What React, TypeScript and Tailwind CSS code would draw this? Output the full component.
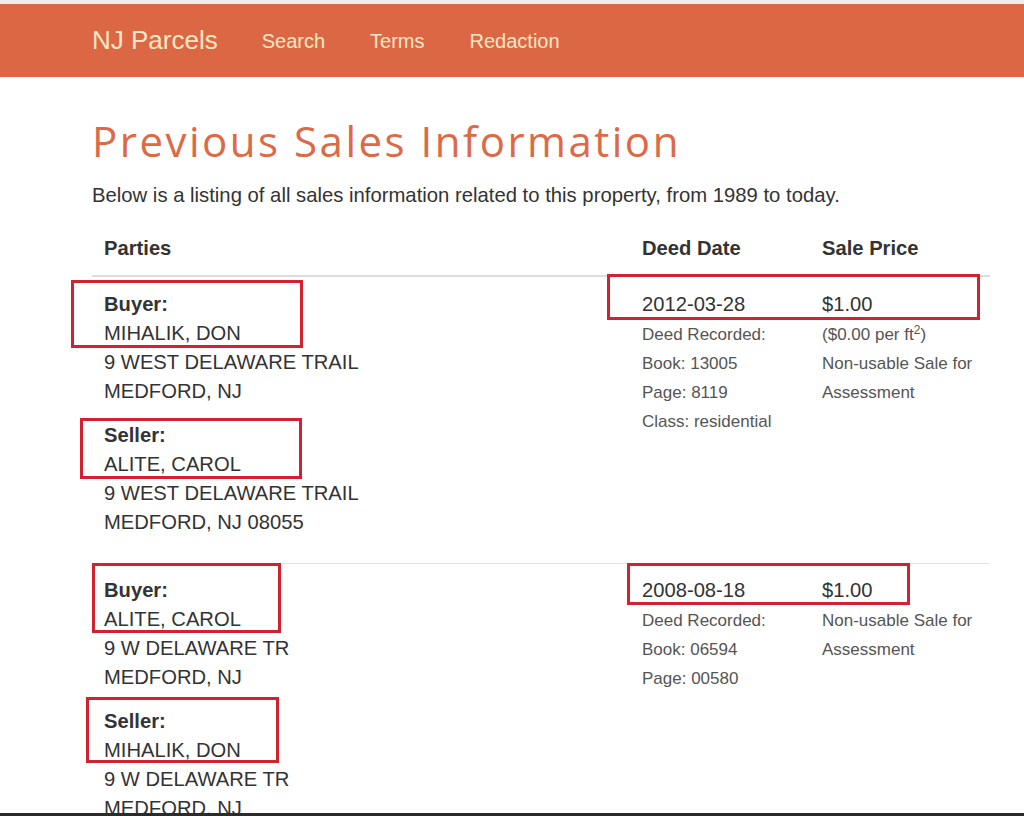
import React from 'react';

type Party = { label: string; name: string; street: string; city: string };
type Sale = {
    parties: Party[];
    date: string;
    details: string[];
    price: string;
    perFt?: string;
    note: string[];
};

const sales: Sale[] = [
    {
        parties: [
            { label: 'Buyer:', name: 'MIHALIK, DON', street: '9 WEST DELAWARE TRAIL', city: 'MEDFORD, NJ' },
            { label: 'Seller:', name: 'ALITE, CAROL', street: '9 WEST DELAWARE TRAIL', city: 'MEDFORD, NJ 08055' },
        ],
        date: '2012-03-28',
        details: ['Deed Recorded:', 'Book: 13005', 'Page: 8119', 'Class: residential'],
        price: '$1.00',
        perFt: '$0.00',
        note: ['Non-usable Sale for', 'Assessment'],
    },
    {
        parties: [
            { label: 'Buyer:', name: 'ALITE, CAROL', street: '9 W DELAWARE TR', city: 'MEDFORD, NJ' },
            { label: 'Seller:', name: 'MIHALIK, DON', street: '9 W DELAWARE TR', city: 'MEDFORD, NJ' },
        ],
        date: '2008-08-18',
        details: ['Deed Recorded:', 'Book: 06594', 'Page: 00580'],
        price: '$1.00',
        note: ['Non-usable Sale for', 'Assessment'],
    },
];

// red annotation boxes drawn on top of the screenshot
const marks = [
    'left-[71px] top-[280px] w-[232px] h-[68px]',
    'left-[80px] top-[418px] w-[222px] h-[61px]',
    'left-[607px] top-[274px] w-[373px] h-[46px]',
    'left-[92px] top-[563px] w-[189px] h-[70px]',
    'left-[86px] top-[697px] w-[193px] h-[66px]',
    'left-[627px] top-[563px] w-[283px] h-[42px]',
];

export default function App() {
    return (
        <div className="relative min-h-screen bg-white font-['Liberation_Sans',Arial,sans-serif] text-[#333] overflow-hidden">
            <div className="h-[4px] bg-[#ececec]" />

            {/* Navbar */}
            <nav className="h-[73px] bg-[#dc6744] flex items-center pl-[92px] text-[#fce7c4]">
                <span className="text-[26px] mr-[44px]">NJ Parcels</span>
                <div className="flex gap-[45px] text-[20px]">
                    <span>Search</span>
                    <span>Terms</span>
                    <span>Redaction</span>
                </div>
            </nav>

            <main className="pl-[92px] w-[990px]">
                <h1 className="mt-[39px] text-[42px] leading-[50px] font-medium text-[#dc6a46] font-['Open_Sans',sans-serif] tracking-[2.5px]">
                    Previous Sales Information
                </h1>
                <p className="mt-[15px] text-[20.3px] leading-[29px]">
                    Below is a listing of all sales information related to this property, from 1989 to today.
                </p>

                {/* Sales table */}
                <div className="mt-[12px] grid grid-cols-[538px_180px_180px] text-[20.2px] leading-[29px]">
                    <div className="px-[12px] py-[12px] font-bold border-b-2 border-[#ddd]">Parties</div>
                    <div className="px-[12px] py-[12px] font-bold border-b-2 border-[#ddd]">Deed Date</div>
                    <div className="px-[12px] py-[12px] font-bold border-b-2 border-[#ddd]">Sale Price</div>

                    {sales.map((s, i) => {
                        const cell = `px-[12px] pb-[11px] ${i > 0 ? 'border-t border-[#e4e4e4] pt-[12px]' : 'pt-[13px]'}`;
                        return (
                            <React.Fragment key={i}>
                                <div className={cell}>
                                    {s.parties.map((p) => (
                                        <div key={p.label} className="mb-[15px]">
                                            <div className="font-bold">{p.label}</div>
                                            <div>{p.name}</div>
                                            <div>{p.street}</div>
                                            <div>{p.city}</div>
                                        </div>
                                    ))}
                                </div>
                                <div className={cell}>
                                    <div className="mb-[1px]">{s.date}</div>
                                    {s.details.map((d) => (
                                        <div key={d} className="text-[17px] text-[#555]">{d}</div>
                                    ))}
                                </div>
                                <div className={cell}>
                                    <div className="mb-[1px]">{s.price}</div>
                                    {s.perFt && (
                                        <div className="text-[17px] text-[#555]">
                                            ({s.perFt} per ft<sup className="text-[12px]">2</sup>)
                                        </div>
                                    )}
                                    {s.note.map((n) => (
                                        <div key={n} className="text-[17px] text-[#555]">{n}</div>
                                    ))}
                                </div>
                            </React.Fragment>
                        );
                    })}
                </div>
            </main>

            {marks.map((m) => (
                <div key={m} className={`absolute border-[3px] border-[#d1232f] ${m}`} />
            ))}

            <div className="fixed left-0 right-0 bottom-0 h-[3px] bg-[#2b2b2b]" />
        </div>
    );
}
